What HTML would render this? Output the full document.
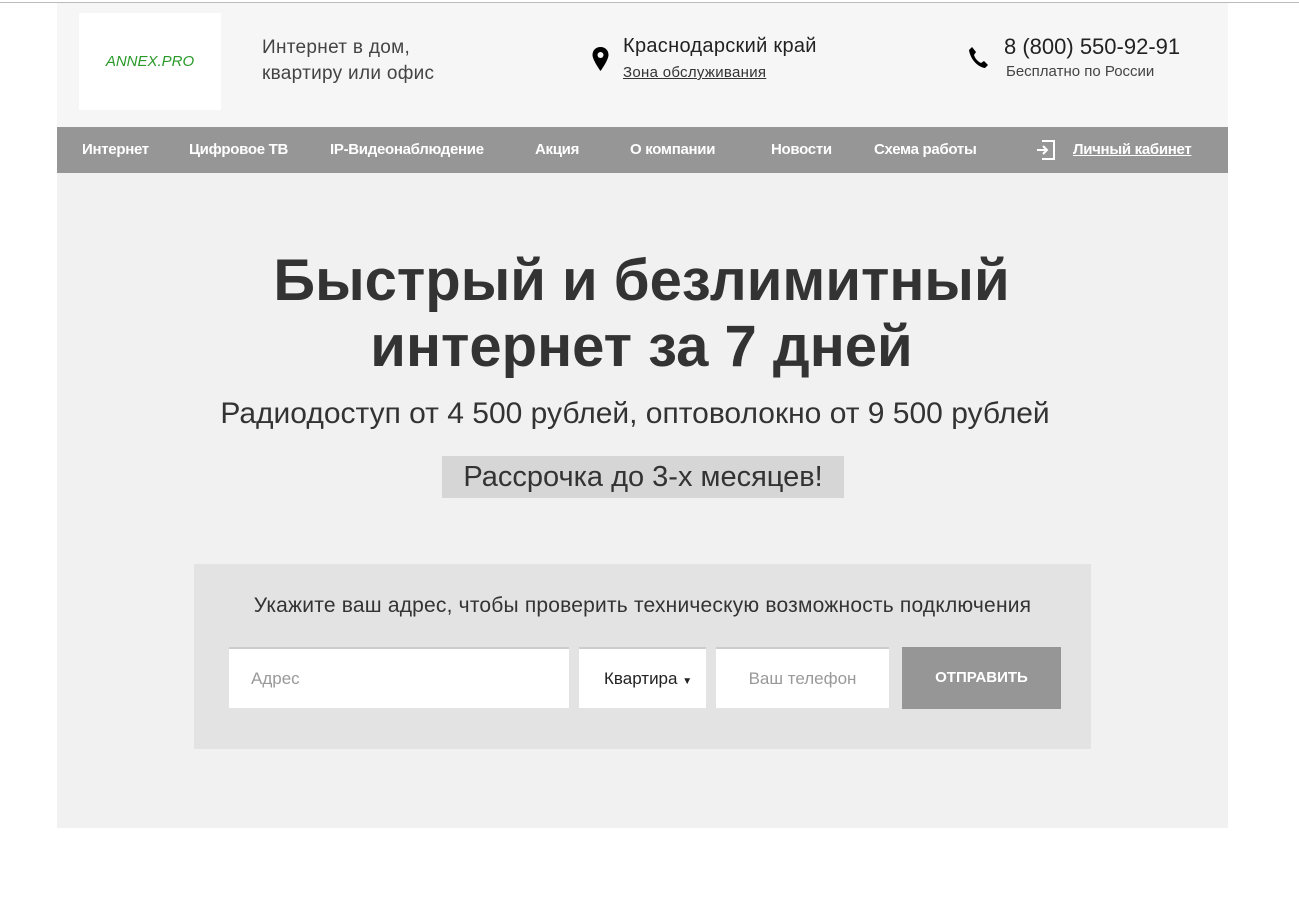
<!DOCTYPE html>
<html><head><meta charset="utf-8"><style>
*{margin:0;padding:0;box-sizing:border-box}
body{width:1299px;height:912px;background:#fff;font-family:"Liberation Sans",sans-serif;position:relative;overflow:hidden;color:#333}
.a{position:absolute}
.topline{left:0;top:2px;width:1299px;height:1px;background:#bbb}
.head{left:57px;top:3px;width:1171px;height:124px;background:#f6f6f6}
.logo{left:79px;top:13px;width:142px;height:97px;background:#fff;color:#2a9a2a;font-style:italic;font-size:15px;text-align:center;line-height:97px}
.nav{left:57px;top:127px;width:1171px;height:46px;background:#969696}
.nav span{position:absolute;top:14px;color:#fff;font-weight:bold;font-size:15px;letter-spacing:-0.3px}
.hero{left:57px;top:173px;width:1171px;height:655px;background:#f1f1f1}
.form{left:194px;top:564px;width:897px;height:185px;background:#e3e3e3}
.inp{background:#fff;border-top:2px solid #ccc;height:61px;font-size:17px;line-height:59px;color:#999}
</style></head><body>
<div class="a topline"></div>
<div class="a head"></div>
<div class="a logo">ANNEX.PRO</div>
<div class="a" style="left:262px;top:35px;font-size:19px;line-height:26px;color:#444;letter-spacing:0.3px">Интернет в дом,<br>квартиру или офис</div>
<svg class="a" style="left:591px;top:46px" width="19" height="26" viewBox="0 0 19 26"><path d="M9.5 1C4.5 1 1.5 4.5 1.5 9c0 5 8 16 8 16s8-11 8-16C17.5 4.5 14.5 1 9.5 1z" fill="#000"/><circle cx="9.5" cy="9" r="3" fill="#f6f6f6"/></svg>
<div class="a" style="left:623px;top:35px;font-size:20px;color:#222;letter-spacing:0.3px">Краснодарский край</div>
<div class="a" style="left:623px;top:64px;font-size:15px;color:#333;text-decoration:underline;letter-spacing:0.3px">Зона обслуживания</div>
<svg class="a" style="left:967px;top:45px" width="24" height="24" viewBox="0 0 24 24"><path d="M5 2l4 5-2 3c1 3 3 6 7 8l3-2 4 4-3 3C10 22 3 13 2 5z" fill="#000"/></svg>
<div class="a" style="left:1004px;top:34px;font-size:22px;color:#222">8 (800) 550-92-91</div>
<div class="a" style="left:1006px;top:63px;font-size:15px;color:#444">Бесплатно по России</div>
<div class="a nav">
<span style="left:25px">Интернет</span>
<span style="left:132px">Цифровое ТВ</span>
<span style="left:273px">IP-Видеонаблюдение</span>
<span style="left:478px">Акция</span>
<span style="left:573px">О компании</span>
<span style="left:714px">Новости</span>
<span style="left:817px">Схема работы</span>
<svg style="position:absolute;left:977px;top:12px" width="22" height="22" viewBox="0 0 22 22" fill="none" stroke="#fff" stroke-width="2"><path d="M8 2h12v18H8M3 11h10M9 7l4 4-4 4"/></svg>
<span style="left:1016px;text-decoration:underline">Личный кабинет</span>
</div>
<div class="a hero"></div>
<div class="a" style="left:0;width:1283px;top:248px;text-align:center;font-size:58px;font-weight:bold;line-height:66px;color:#333">Быстрый и безлимитный<br>интернет за 7 дней</div>
<div class="a" style="left:0;width:1270px;top:397px;text-align:center;font-size:30px;color:#333">Радиодоступ от 4 500 рублей, оптоволокно от 9 500 рублей</div>
<div class="a" style="left:442px;top:456px;width:402px;height:42px;background:#d6d6d6;text-align:center;font-size:29px;line-height:42px;color:#333">Рассрочка до 3-х месяцев!</div>
<div class="a form"></div>
<div class="a" style="left:194px;width:897px;top:594px;text-align:center;font-size:21px;color:#333;letter-spacing:0.2px">Укажите ваш адрес, чтобы проверить техническую возможность подключения</div>
<div class="a inp" style="left:229px;top:647px;width:340px;padding-left:22px">Адрес</div>
<div class="a inp" style="left:579px;top:647px;width:127px;padding-left:25px;color:#222">Квартира <span style="font-size:10px">▼</span></div>
<div class="a inp" style="left:716px;top:647px;width:173px;text-align:center">Ваш телефон</div>
<div class="a" style="left:902px;top:647px;width:159px;height:62px;background:#969696;color:#fff;font-weight:bold;font-size:15px;text-align:center;line-height:62px">ОТПРАВИТЬ</div>
</body></html>
